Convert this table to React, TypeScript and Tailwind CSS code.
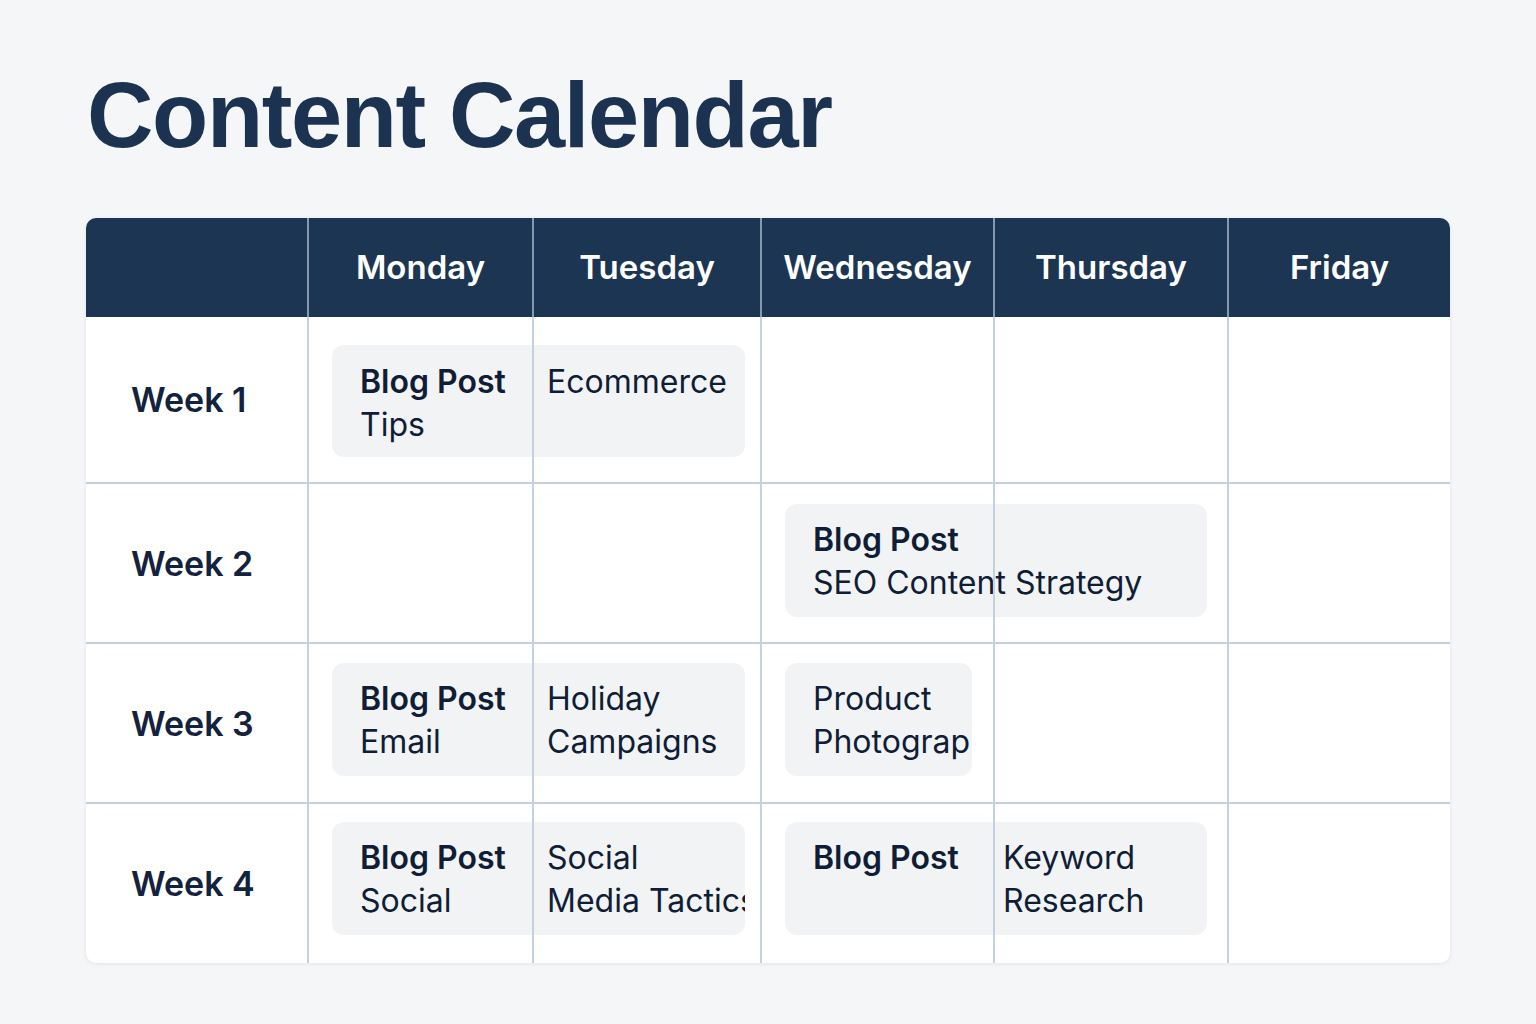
import React from 'react';

const cols = 'grid-cols-[221px_225px_228px_233px_234px_223px]';
const days = ['Monday', 'Tuesday', 'Wednesday', 'Thursday', 'Friday'];

// vertical grid lines drawn on top of the cards
function Lines() {
  return (
    <>
      <div className="col-start-2 row-start-1 border-l-2 border-[#c3d1e1] z-10 pointer-events-none" />
      <div className="col-start-3 row-start-1 border-l-2 border-[#c3d1e1] z-10 pointer-events-none" />
      <div className="col-start-4 row-start-1 border-l-2 border-[#c3d1e1] z-10 pointer-events-none" />
      <div className="col-start-5 row-start-1 border-l-2 border-[#c3d1e1] z-10 pointer-events-none" />
      <div className="col-start-6 row-start-1 border-l-2 border-[#c3d1e1] z-10 pointer-events-none" />
    </>
  );
}

function Label({ text }: { text: string }) {
  return (
    <div className="col-start-1 row-start-1 flex items-center pl-[45px] text-[34px] font-semibold text-[#13233d]">
      {text}
    </div>
  );
}

function Lines2({ a, b, bold }: { a: string; b?: string; bold?: boolean }) {
  return (
    <div className="leading-[43px] text-[32px] whitespace-nowrap">
      <div className={bold ? 'font-semibold' : ''}>{a}</div>
      {b && <div>{b}</div>}
    </div>
  );
}

export default function App() {
  return (
    <div className="min-h-screen bg-[#f5f6f8] pt-[69px] pb-[60px]" style={{ fontFamily: 'Inter, "Noto Sans", sans-serif' }}>
      <h1
        className="ml-[87px] text-[92px] leading-none font-bold tracking-[-0.015em] text-[#1b3350]"
        style={{ fontFamily: '"Liberation Sans", Arial, sans-serif' }}
      >
        Content Calendar
      </h1>

      <div className="mt-[57px] ml-[86px] w-[1364px] rounded-[10px] overflow-hidden bg-white shadow-[0_1px_4px_rgba(15,30,55,0.08)]">
        {/* header */}
        <div className={`grid ${cols} h-[99px] bg-[#1c3553] text-white text-[33px] font-semibold`}>
          <div />
          {days.map(d => (
            <div key={d} className="flex items-center justify-center border-l-2 border-[#8598ad]">{d}</div>
          ))}
        </div>

        <div className="text-[#0f1e36]">
          {/* Week 1 */}
          <div className={`grid ${cols} h-[165px]`}>
            <Label text="Week 1" />
            <div className="col-start-2 col-span-2 row-start-1 self-start mt-[28px] ml-[25px] mr-[15px] h-[112px] rounded-[12px] bg-[#f2f3f5] flex overflow-hidden pt-[15px]">
              <div className="w-[200px] shrink-0 pl-[28px]"><Lines2 a="Blog Post" b="Tips" bold /></div>
              <div className="pl-[15px]"><Lines2 a="Ecommerce" /></div>
            </div>
            <Lines />
          </div>

          {/* Week 2 */}
          <div className={`grid ${cols} h-[160px] border-t-2 border-[#c3d1e1]`}>
            <Label text="Week 2" />
            <div className="col-start-4 col-span-2 row-start-1 self-start mt-[20px] ml-[25px] mr-[20px] h-[113px] rounded-[12px] bg-[#f2f3f5] flex overflow-hidden pt-[14px]">
              <div className="pl-[28px]"><Lines2 a="Blog Post" b="SEO Content Strategy" bold /></div>
            </div>
            <Lines />
          </div>

          {/* Week 3 */}
          <div className={`grid ${cols} h-[160px] border-t-2 border-[#c3d1e1]`}>
            <Label text="Week 3" />
            <div className="col-start-2 col-span-2 row-start-1 self-start mt-[19px] ml-[25px] mr-[15px] h-[113px] rounded-[12px] bg-[#f2f3f5] flex overflow-hidden pt-[14px]">
              <div className="w-[200px] shrink-0 pl-[28px]"><Lines2 a="Blog Post" b="Email" bold /></div>
              <div className="pl-[15px]"><Lines2 a="Holiday" b="Campaigns" /></div>
            </div>
            <div className="col-start-4 row-start-1 self-start mt-[19px] ml-[25px] mr-[21px] h-[113px] rounded-[12px] bg-[#f2f3f5] flex overflow-hidden pt-[14px]">
              <div className="pl-[28px]"><Lines2 a="Product" b="Photography" /></div>
            </div>
            <Lines />
          </div>

          {/* Week 4 */}
          <div className={`grid ${cols} h-[161px] border-t-2 border-[#c3d1e1]`}>
            <Label text="Week 4" />
            <div className="col-start-2 col-span-2 row-start-1 self-start mt-[18px] ml-[25px] mr-[15px] h-[113px] rounded-[12px] bg-[#f2f3f5] flex overflow-hidden pt-[14px]">
              <div className="w-[200px] shrink-0 pl-[28px]"><Lines2 a="Blog Post" b="Social" bold /></div>
              <div className="pl-[15px]"><Lines2 a="Social" b="Media Tactics" /></div>
            </div>
            <div className="col-start-4 col-span-2 row-start-1 self-start mt-[18px] ml-[25px] mr-[20px] h-[113px] rounded-[12px] bg-[#f2f3f5] flex overflow-hidden pt-[14px]">
              <div className="w-[208px] shrink-0 pl-[28px]"><Lines2 a="Blog Post" bold /></div>
              <div className="pl-[10px]"><Lines2 a="Keyword" b="Research" /></div>
            </div>
            <Lines />
          </div>
        </div>
      </div>
    </div>
  );
}
